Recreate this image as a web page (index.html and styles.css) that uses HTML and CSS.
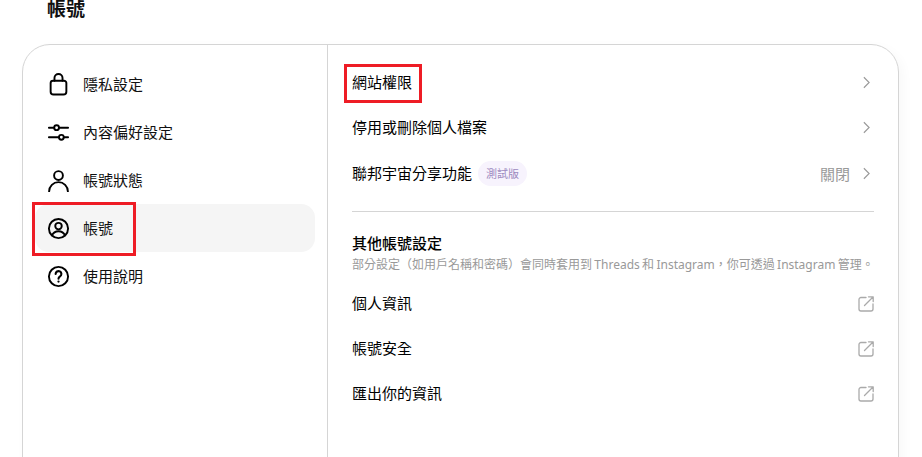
FILE: index.html
```html
<!DOCTYPE html>
<html lang="zh-Hant">
<head>
<meta charset="utf-8">
<title>帳號</title>
<link rel="stylesheet" href="styles.css">
</head>
<body>
<h1 class="page-title">帳號</h1>
<main class="card">
  <nav class="side">
    <a class="nav-item"><svg class="nav-icon" viewBox="0 0 24 24"><path d="M3.800 10.500a2.500 2.500 0 0 1 2.500-2.500h11.400a2.500 2.500 0 0 1 2.500 2.500v9a3 3 0 0 1-3 3h-10.400a3 3 0 0 1-3-3z"/><path d="M7.800 8V5.200a4.200 4.200 0 0 1 8.400 0V8"/></svg><span>隱私設定</span></a>
    <a class="nav-item"><svg class="nav-icon" viewBox="0 0 24 24"><path d="M2 7h5.500M12.500 7H22M2 17h10.500M17.500 17H22"/><circle cx="10" cy="7" r="2.500"/><circle cx="15" cy="17" r="2.500"/></svg><span>內容偏好設定</span></a>
    <a class="nav-item"><svg class="nav-icon" viewBox="0 0 24 24"><circle cx="12" cy="6.800" r="4.600"/><path d="M2.200 23.500a9.800 9.800 0 0 1 19.600 0"/></svg><span>帳號狀態</span></a>
    <a class="nav-item active"><svg class="nav-icon" viewBox="0 0 24 24"><circle cx="12" cy="12" r="10"/><circle cx="12" cy="9.500" r="3.400"/><path d="M5.200 19.200c1.200-2.800 3.800-4.400 6.800-4.400s5.600 1.600 6.800 4.400"/></svg><span>帳號</span></a>
    <a class="nav-item"><svg class="nav-icon" viewBox="0 0 24 24"><circle cx="12" cy="12" r="10"/><path class="thick" d="M9 9.400a3 3 0 1 1 4.600 2.500c-1 .7-1.600 1.300-1.600 2.500"/><circle class="dot" cx="12" cy="17.300" r="1.200"/></svg><span>使用說明</span></a>
  </nav>
  <section class="content">
    <ul class="rows top">
      <li class="row"><span class="label">網站權限</span><svg class="chev" viewBox="0 0 8 14"><path d="M1 1l6 6-6 6"/></svg></li>
      <li class="row"><span class="label">停用或刪除個人檔案</span><svg class="chev" viewBox="0 0 8 14"><path d="M1 1l6 6-6 6"/></svg></li>
      <li class="row row-badge"><span class="label">聯邦宇宙分享功能</span><span class="badge">測試版</span><span class="value">關閉</span><svg class="chev" viewBox="0 0 8 14"><path d="M1 1l6 6-6 6"/></svg></li>
    </ul>
    <hr class="divider">
    <h2 class="section-title">其他帳號設定</h2>
    <p class="section-note">部分設定（如用戶名稱和密碼）會同時套用到 Threads 和 Instagram，你可透過 Instagram 管理。</p>
    <ul class="rows">
      <li class="row"><span class="label">個人資訊</span><svg class="ext" viewBox="0 0 16 16"><path d="M8 1.500H3a2 2 0 0 0-2 2v9.500a2 2 0 0 0 2 2h10a2 2 0 0 0 2-2V8"/><path d="M10.500.800h4.700v4.700M15 1L6.500 9.500"/></svg></li>
      <li class="row"><span class="label">帳號安全</span><svg class="ext" viewBox="0 0 16 16"><path d="M8 1.500H3a2 2 0 0 0-2 2v9.500a2 2 0 0 0 2 2h10a2 2 0 0 0 2-2V8"/><path d="M10.500.800h4.700v4.700M15 1L6.500 9.500"/></svg></li>
      <li class="row"><span class="label">匯出你的資訊</span><svg class="ext" viewBox="0 0 16 16"><path d="M8 1.500H3a2 2 0 0 0-2 2v9.500a2 2 0 0 0 2 2h10a2 2 0 0 0 2-2V8"/><path d="M10.500.800h4.700v4.700M15 1L6.500 9.500"/></svg></li>
    </ul>
  </section>
</main>
<div class="mark mark-nav"></div>
<div class="mark mark-site"></div>
</body>
</html>
```
FILE: styles.css
```css
* { box-sizing: border-box; }
html, body { margin: 0; height: 100%; overflow: hidden; background: #fff; }
body {
  font-family: "Noto Sans", "Noto Sans CJK TC", sans-serif;
  font-size: 15px;
  color: #000;
  position: relative;
}
.page-title {
  margin: 0;
  height: 44px;
  padding-left: 47px;
  font-size: 19px;
  line-height: 19px;
  font-weight: 600;
  color: #111;
}
.card {
  display: flex;
  margin: 0 23px 0 22px;
  height: 480px;
  border: 1px solid #d5d5d5;
  border-radius: 28px;
  box-shadow: 4px 4px 12px rgba(0, 0, 0, .03);
}
.side {
  flex: none;
  width: 305px;
  padding: 15px 12px 0;
  border-right: 1px solid #d5d5d5;
}
.nav-item {
  display: flex;
  align-items: center;
  gap: 13px;
  height: 48px;
  padding-left: 12px;
  border-radius: 14px;
  line-height: 20px;
  color: #111;
}
.nav-item.active { background: #f5f5f5; }
.nav-icon {
  flex: none;
  width: 23px;
  height: 23px;
  fill: none;
  stroke: #000;
  stroke-width: 2;
  stroke-linecap: round;
  stroke-linejoin: round;
}
.thick { stroke-width: 2.200; }
.dot { fill: #000; stroke: none; }
.content {
  flex: 1;
  min-width: 0;
  padding: 15px 24px 0 24px;
}
.rows { list-style: none; margin: 0; padding: 0; }
.row {
  display: flex;
  align-items: center;
  justify-content: space-between;
  height: 45px;
  line-height: 20px;
}
.label { margin-bottom: 2px; }
.row-badge { height: 47px; justify-content: flex-start; }
.chev {
  flex: none;
  width: 7px;
  height: 13px;
  margin-right: 4px;
  fill: none;
  stroke: #999;
  stroke-width: 1.300;
}
.badge {
  margin-left: 6px;
  padding: 0 8px;
  height: 25px;
  border-radius: 13px;
  background: #f7f3fd;
  color: #9c8ac0;
  font-size: 11px;
  line-height: 25px;
}
.value { margin-left: auto; margin-right: 13px; color: #999; }
.divider {
  margin: 14px 0 0;
  border: 0;
  border-top: 1px solid #d5d5d5;
}
.section-title {
  margin: 21px 0 0;
  font-size: 15px;
  line-height: 20px;
  font-weight: 500;
}
.section-note {
  margin: 3px 0 7px;
  font-size: 12px;
  line-height: 18px;
  color: #999;
  white-space: nowrap;
  word-spacing: -.8px;
}
.ext {
  flex: none;
  width: 16px;
  height: 16px;
  fill: none;
  stroke: #aaa;
  stroke-width: 1.300;
  stroke-linecap: round;
  stroke-linejoin: round;
}
.mark { position: absolute; border: 3px solid #ee1c25; }
.mark-nav { left: 32px; top: 202px; width: 104px; height: 54px; }
.mark-site { left: 344px; top: 64px; width: 78px; height: 39px; }
```
